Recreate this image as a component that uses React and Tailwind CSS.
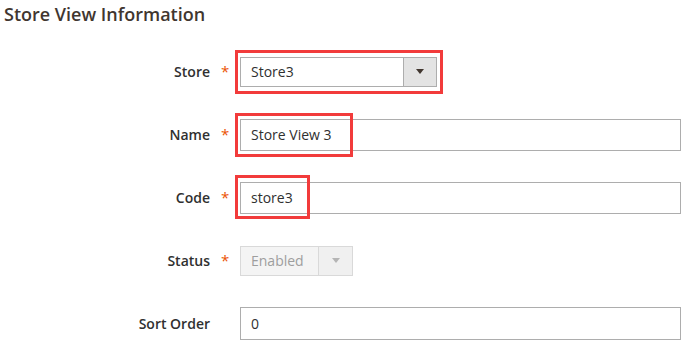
const Field = ({ label, required = true, children }) => (
  <div className="flex h-[63px] items-center">
    <div className="flex w-[240px] shrink-0 items-center justify-end pr-[13px]">
      <span className="text-[14px] font-semibold text-[#303030]">{label}</span>
      <span className={`ml-[11px] w-[6px] text-[15px] leading-none text-[#eb5202] ${required ? '' : 'invisible'}`}>*</span>
    </div>
    <div className="relative">{children}</div>
  </div>
);

const Arrow = ({ muted }) => (
  <span
    className={`block h-0 w-0 border-x-[4px] border-t-[5px] border-x-transparent ${muted ? 'border-t-[#b5b5b5]' : 'border-t-[#41362f]'}`}
  />
);

const Highlight = ({ className }) => (
  <div className={`pointer-events-none absolute border-[3px] border-[#f23b3b] ${className}`} />
);

export default function App() {
  return (
    <div className="h-[351px] w-[691px] bg-white font-['Open_Sans',sans-serif]">
      <h1 className="pl-[4px] pt-[3px] text-[18px] font-semibold leading-[23px] text-[#41362f]">
        Store View Information
      </h1>

      <div className="mt-[14px] flex flex-col">
        <Field label="Store">
          <div className="flex h-[30px] w-[197px] border border-[#adadad] bg-white">
            <div className="flex flex-1 items-center pl-[10px] text-[14px] text-[#303030]">Store3</div>
            <div className="flex w-[33px] items-center justify-center border-l border-[#adadad] bg-[#e3e3e3]">
              <Arrow />
            </div>
          </div>
          <Highlight className="-left-[5px] -top-[7px] h-[44px] w-[208px]" />
        </Field>

        <Field label="Name">
          <div className="flex h-[32px] w-[441px] items-center border border-[#adadad] bg-white pl-[10px] text-[14px] text-[#303030]">
            Store View 3
          </div>
          <Highlight className="-left-[5px] -top-[6px] h-[44px] w-[118px]" />
        </Field>

        <Field label="Code">
          <div className="flex h-[32px] w-[441px] items-center border border-[#adadad] bg-white pl-[10px] text-[14px] text-[#303030]">
            store3
          </div>
          <Highlight className="-left-[5px] -top-[7px] h-[44px] w-[75px]" />
        </Field>

        <Field label="Status">
          <div className="flex h-[30px] w-[113px] border border-[#d9d9d9] bg-[#f4f4f4]">
            <div className="flex flex-1 items-center pl-[10px] text-[14px] text-[#9e9e9e]">Enabled</div>
            <div className="flex w-[34px] items-center justify-center border-l border-[#d9d9d9] bg-[#f0f0f0]">
              <Arrow muted />
            </div>
          </div>
        </Field>

        <Field label="Sort Order" required={false}>
          <div className="flex h-[33px] w-[441px] items-center border border-[#adadad] bg-white pl-[10px] text-[14px] text-[#303030]">
            0
          </div>
        </Field>
      </div>
    </div>
  );
}
